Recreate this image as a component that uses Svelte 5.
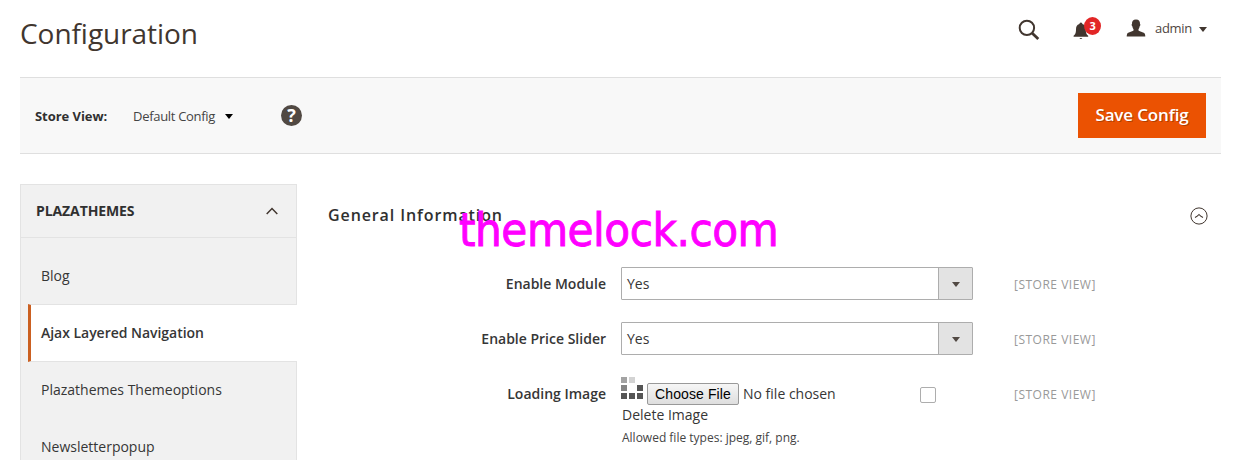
<script>
  const links = ['Blog', 'Ajax Layered Navigation', 'Plazathemes Themeoptions', 'Newsletterpopup'];
  const active = 1;
  const selects = ['Enable Module', 'Enable Price Slider'];
</script>

<div class="page">
  <header>
    <h1>Configuration</h1>
    <div class="tools">
      <svg class="search" width="22" height="22" viewBox="0 0 22 22"><circle cx="8.9" cy="8.9" r="7.2" fill="none" stroke="#41362f" stroke-width="2" /><path d="M14 14l6.3 6" stroke="#41362f" stroke-width="2.8" /></svg>
      <div class="bell">
        <svg width="16" height="18" viewBox="0 0 16 18"><path fill="#41362f" d="M6.4 1.900a1.500 1.500 0 0 1 3 0C12 2.600 12.800 4.500 12.800 7.500c0 3.800.8 4.800 2.400 6.300v1H.6v-1C2.200 12.300 3 11.300 3 7.500c0-3 .8-4.900 3.400-5.600zM6.400 15.900h3q-1.500 2-3 0z" /></svg>
        <span class="badge">3</span>
      </div>
      <svg class="person" width="20" height="18" viewBox="0 0 20 18"><path fill="#41362f" d="M10 .5c3 0 4.200 1.900 4 4.600.6.200.4 1.800-.3 2.100-.3 1.500-.7 2.400-1.200 2.900v1.400c1.500 1.300 5.700 1.700 6.400 3.400.3.800.4 1.700.4 2.600H.7c0-.9.100-1.800.4-2.600.7-1.700 4.900-2.100 6.400-3.400v-1.400c-.5-.5-.9-1.400-1.200-2.900-.7-.3-.9-1.900-.3-2.100C5.800 2.400 7 .5 10 .5z" /></svg>
      <span class="admin">admin</span>
      <i class="tri"></i>
    </div>
  </header>

  <section class="bar">
    <b>Store View:</b>
    <span class="scope">Default Config</span>
    <i class="tri dark"></i>
    <span class="help">?</span>
    <button class="save">Save Config</button>
  </section>

  <div class="columns">
    <nav>
      <div class="group">
        <strong>PLAZATHEMES</strong>
        <svg width="12" height="8" viewBox="0 0 12 8"><path d="M.7 7L6 1.500 11.300 7" fill="none" stroke="#41362f" stroke-width="1.500" /></svg>
      </div>
      <ul>
        {#each links as link, i}
          <li class:active={i === active}>{link}</li>
        {/each}
      </ul>
    </nav>

    <main>
      <div class="heading">
        <h2>General Information</h2>
        <svg width="18" height="18" viewBox="0 0 18 18" fill="none" stroke="#41362f"><circle cx="9" cy="9" r="8.100" stroke-width="1" /><path d="M5 10.500Q7.500 9.200 9 7.500Q10.500 9.200 13 10.500" stroke-width="1.100" /></svg>
        <span class="stamp">themelock.com</span>
      </div>
      {#each selects as label}
        <div class="field">
          <span class="label">{label}</span>
          <div class="select"><span>Yes</span><div class="arrow"><i class="tri small"></i></div></div>
          <span class="note">[STORE VIEW]</span>
        </div>
      {/each}
      <div class="field upload">
        <span class="label">Loading Image</span>
        <div class="control">
          <div class="file">
            <svg width="22" height="22" viewBox="0 0 22 22"><path fill="#a3a3a3" d="M0 0h6v6H0z" /><path fill="#d3d3d3" d="M8 0h6v6H8z" /><path fill="#858585" d="M0 8h6v6H0z" /><path fill="#555" d="M16 8h6v6h-6zM0 16h6v6H0zM8 16h6v6H8zM16 16h6v6h-6z" /></svg>
            <button class="choose">Choose File</button>
            <span class="nofile">No file chosen</span>
            <i class="check"></i>
          </div>
          <div class="delete">Delete Image</div>
          <div class="types">Allowed file types: jpeg, gif, png.</div>
        </div>
        <span class="note">[STORE VIEW]</span>
      </div>
    </main>
  </div>
</div>

<style>
  :global(body) { background: #fff; overflow: hidden; }
  .page { width: 1201px; height: 460px; padding-left: 20px; overflow: hidden; box-sizing: content-box; font: 14px/20px "Open Sans", sans-serif; color: #363636; }
  header { height: 77px; display: flex; justify-content: space-between; align-items: flex-start; }
  h1 { margin: 13px 0 0; font-size: 28px; line-height: 40px; font-weight: 400; letter-spacing: -.05px; color: #41362f; }
  .tools { display: flex; align-items: flex-start; padding: 18px 14px 0 0; }
  .search { margin: 1px 33px 0 0; }
  .bell { position: relative; width: 28px; margin: 4px 25px 0 0; height: 18px; }
  .bell svg { display: block; }
  .badge { position: absolute; left: 11px; top: -5px; width: 17px; height: 18px; border-radius: 50%; background: #e22626; color: #fff; font-size: 11px; line-height: 18px; font-weight: 700; text-align: center; }
  .person { margin: 1px 9px 0 0; }
  .admin { font-size: 13px; letter-spacing: -.3px; color: #50463f; }
  .tri { border: 4px solid transparent; border-top: 5px solid #41362f; border-bottom: 0; margin: 9px 0 0 7px; }
  .bar { height: 77px; box-sizing: border-box; border: solid #dfdfdf; border-width: 1px 0; background: #f8f8f8; display: flex; align-items: center; padding: 0 15px; }
  .bar b { font-size: 13px; font-weight: 700; letter-spacing: -.05px; width: 98px; color: #303030; white-space: nowrap; }
  .scope { font-size: 13px; width: 85px; letter-spacing: -.3px; white-space: nowrap; color: #444; }
  .tri.dark { border-top-color: #000; margin: 2px 0 0 7px; }
  .help { width: 21px; height: 21px; margin-left: 48px; border-radius: 50%; background: #514943; color: #fff; font-weight: 700; font-size: 18px; line-height: 21px; text-align: center; }
  .save { margin-left: auto; width: 128px; height: 45px; padding: 0 0 2px; border: 0; background: #eb5202; color: #fff; font: 600 17px/43px "Open Sans", sans-serif; letter-spacing: -.15px; text-shadow: 1px 1px 0 rgba(0,0,0,.25); }
  .columns { display: flex; margin-top: 30px; }
  nav { width: 277px; height: 290px; box-sizing: border-box; background: #f1f1f1; border: 1px solid #e3e3e3; }
  .group { height: 53px; box-sizing: border-box; border-bottom: 1px solid #e3e3e3; display: flex; justify-content: space-between; align-items: center; padding: 0 18px 0 15px; }
  .group strong { font-weight: 700; letter-spacing: -.1px; color: #303030; }
  ul { list-style: none; margin: 9px -1px 0 7px; padding: 0; }
  li { height: 57px; line-height: 57px; padding-left: 13px; box-sizing: border-box; }
  li.active { background: #fff; border: solid #e3e3e3; border-width: 1px 0; border-left: 3px solid #cb6021; padding-left: 10px; height: 58px; margin-bottom: -1px; line-height: 56px; font-weight: 600; letter-spacing: -.03px; }
  main { flex: 1; padding-left: 31px; }
  .heading { height: 63px; box-sizing: border-box; padding: 0 13px 0 0; margin-bottom: 20px; display: flex; justify-content: space-between; align-items: center; position: relative; }
  h2 { margin: 0 0 2px; font-size: 16px; line-height: 22px; font-weight: 600; letter-spacing: .9px; color: #303030; }
  .stamp { position: absolute; left: 131px; top: 16px; font: 47px/60px "DejaVu Sans Condensed", "DejaVu Sans", sans-serif; font-stretch: condensed; letter-spacing: -.5px; color: #f0f; -webkit-text-stroke: .9px #f0f; white-space: nowrap; }
  .field { height: 55px; display: flex; align-items: flex-start; }
  .label { width: 278px; margin-right: 15px; text-align: right; font-weight: 600; line-height: 33px; }
  .select { width: 352px; height: 33px; box-sizing: border-box; border: 1px solid #adadad; display: flex; line-height: 32px; padding-left: 5px; justify-content: space-between; border-radius: 1px; }
  .arrow { width: 33px; border-left: 1px solid #adadad; background: #e3e3e3; display: flex; align-items: center; justify-content: center; }
  .tri.small { margin: 1px 0 0; border-top-color: #514943; }
  .note { margin-left: 41px; font-size: 12px; line-height: 36px; letter-spacing: .5px; color: #999; }
  .control { width: 352px; }
  .file { display: flex; height: 28px; }
  .choose { width: 92px; height: 22px; box-sizing: border-box; margin: 6px 4px 0; padding: 0; border: 1px solid #999; border-radius: 2px; background: linear-gradient(#f6f6f6, #dedede); color: #000; font: 14px/19px "Liberation Sans", sans-serif; letter-spacing: .1px; }
  .nofile { line-height: 33px; }
  .check { width: 16px; height: 16px; box-sizing: border-box; border: 1px solid #adadad; border-radius: 2px; margin: 10px 37px 0 auto; }
  .delete { line-height: 20px; padding-left: 1px; }
  .types { font-size: 12px; line-height: 18px; margin-top: 4px; padding-left: 1px; color: #444; }
</style>
